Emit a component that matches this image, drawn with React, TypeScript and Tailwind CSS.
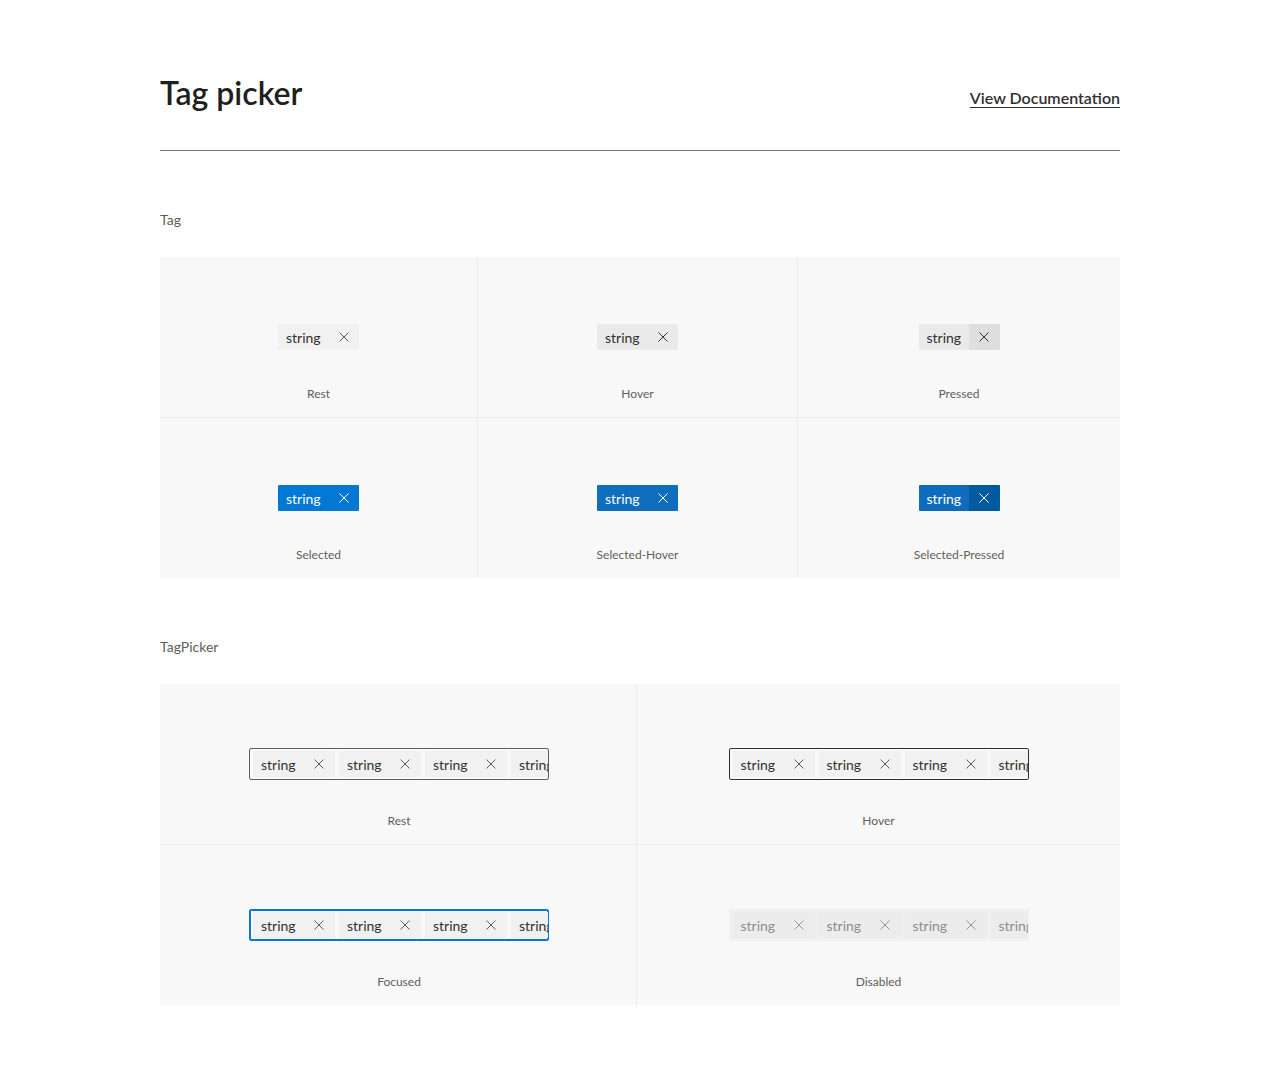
import React from "react";

const FONT = { fontFamily: 'Lato, "Open Sans", Arial, sans-serif' };

function XIcon({ color }: { color: string }) {
  return (
    <svg width="10" height="10" viewBox="0 0 10 10" fill="none">
      <path d="M0.5 0.5 L9.5 9.5 M9.5 0.5 L0.5 9.5" stroke={color} strokeWidth="1" />
    </svg>
  );
}

type Variant =
  | "rest"
  | "hover"
  | "pressed"
  | "selected"
  | "selectedHover"
  | "selectedPressed"
  | "disabled";

function Tag({ variant, inPicker = false }: { variant: Variant; inPicker?: boolean }) {
  const styles: Record<Variant, { text: string; x: string; color: string; icon: string }> = {
    rest: { text: "bg-[#f1f1f1]", x: "bg-[#f1f1f1]", color: "text-[#323130]", icon: "#605e5c" },
    hover: { text: "bg-[#eaeaea]", x: "bg-[#eaeaea]", color: "text-[#323130]", icon: "#323130" },
    pressed: { text: "bg-[#eaeaea]", x: "bg-[#dedede]", color: "text-[#323130]", icon: "#323130" },
    selected: { text: "bg-[#0078d4]", x: "bg-[#0078d4]", color: "text-white", icon: "#ffffff" },
    selectedHover: { text: "bg-[#106ebe]", x: "bg-[#106ebe]", color: "text-white", icon: "#ffffff" },
    selectedPressed: { text: "bg-[#0f6cbd]", x: "bg-[#005a9e]", color: "text-white", icon: "#ffffff" },
    disabled: { text: "bg-[#ececec]", x: "bg-[#ececec]", color: "text-[#8f8d8b]", icon: "#979593" },
  };
  const s = styles[variant];
  return (
    <div className={`flex h-[26px] shrink-0 overflow-hidden rounded-[1px] ${inPicker ? "m-[2px]" : ""}`}>
      <div className={`flex w-[50px] items-center pl-2 pt-px text-[14px] leading-[25px] ${s.text} ${s.color}`}>
        string
      </div>
      <div className={`flex ${inPicker ? "w-[32px]" : "w-[31px]"} items-center justify-center ${s.x}`}>
        <XIcon color={s.icon} />
      </div>
    </div>
  );
}

function TagCell({ variant, label }: { variant: Variant; label: string }) {
  return (
    <div className="flex h-[160px] flex-col items-center bg-[#f8f8f8] pt-[67px]">
      <Tag variant={variant} />
      <div className="mt-[36px] text-[12px] leading-[16px] text-[#605e5c]">{label}</div>
    </div>
  );
}

type PickerState = "rest" | "hover" | "focused" | "disabled";

function Picker({ state }: { state: PickerState }) {
  const box: Record<PickerState, string> = {
    rest: "border border-[#605e5c]",
    hover: "border border-[#323130]",
    focused: "border border-[#0078d4] shadow-[inset_0_0_0_1px_#0078d4]",
    disabled: "border border-transparent bg-[#f0f0f0]",
  };
  const tv: Variant = state === "disabled" ? "disabled" : "rest";
  return (
    <div className={`flex h-[32px] w-[300px] items-center overflow-hidden rounded-[2px] pl-px ${box[state]}`}>
      <Tag variant={tv} inPicker />
      <Tag variant={tv} inPicker />
      <Tag variant={tv} inPicker />
      <Tag variant={tv} inPicker />
    </div>
  );
}

function PickerCell({ state, label, shift = false }: { state: PickerState; label: string; shift?: boolean }) {
  return (
    <div className={`flex h-[160px] flex-col items-center bg-[#f8f8f8] pt-[64px] ${shift ? "pl-[2px]" : ""}`}>
      <Picker state={state} />
      <div className="mt-[33px] text-[12px] leading-[16px] text-[#605e5c]">{label}</div>
    </div>
  );
}

export default function App() {
  return (
    <div className="min-h-[1077px] bg-white" style={FONT}>
      <div className="mx-auto w-[960px] pb-[72px]">
        <div className="flex items-end justify-between pt-[70px] pb-[34px]">
          <h1 className="text-[32px] font-semibold leading-[46px] text-[#201f1e]">Tag picker</h1>
          <a className="mb-[7px] text-[16px] font-semibold leading-[22px] text-[#323130] underline underline-offset-[3px]">
            View Documentation
          </a>
        </div>
        <div className="h-px bg-[#7a7a7a]" />

        <div className="mt-[59px] text-[14px] leading-[20px] text-[#605e5c]">Tag</div>
        <div className="mt-[27px] grid grid-cols-[317px_319px_1fr] gap-px bg-[#ebebeb]">
          <TagCell variant="rest" label="Rest" />
          <TagCell variant="hover" label="Hover" />
          <TagCell variant="pressed" label="Pressed" />
          <TagCell variant="selected" label="Selected" />
          <TagCell variant="selectedHover" label="Selected-Hover" />
          <TagCell variant="selectedPressed" label="Selected-Pressed" />
        </div>

        <div className="mt-[59px] text-[14px] leading-[20px] text-[#605e5c]">TagPicker</div>
        <div className="mt-[27px] grid grid-cols-[476px_1fr] gap-px bg-[#ebebeb]">
          <PickerCell state="rest" label="Rest" shift />
          <PickerCell state="hover" label="Hover" />
          <PickerCell state="focused" label="Focused" shift />
          <PickerCell state="disabled" label="Disabled" />
        </div>
      </div>
    </div>
  );
}
